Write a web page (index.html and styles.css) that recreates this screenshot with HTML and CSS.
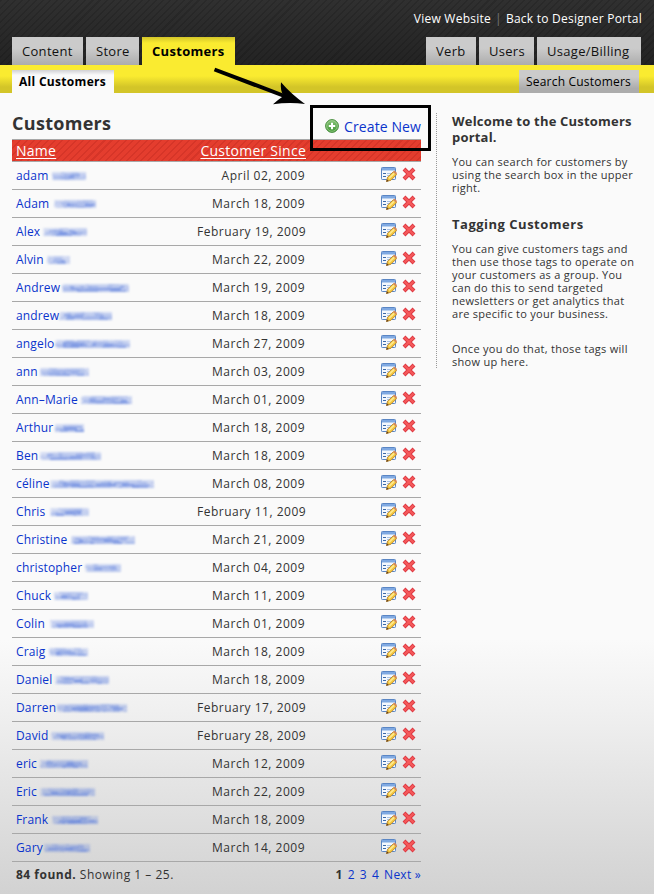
FILE: index.html
```html
<!DOCTYPE html>
<html lang="en">
<head>
<meta charset="utf-8">
<title>Customers</title>
<link rel="stylesheet" href="styles.css">
</head>
<body>
<svg class="defs" width="0" height="0">
  <defs>
    <linearGradient id="g-green" x1="0" y1="0" x2="0" y2="1"><stop offset="0" stop-color="#8cc47c"/><stop offset="1" stop-color="#3c9430"/></linearGradient>
    <symbol id="i-edit" viewBox="0 0 16 16">
      <rect x="0.5" y="1.5" width="14" height="12" rx="0.8" fill="#f4f8fd" stroke="#5a86c4"/>
      <rect x="1" y="2" width="13" height="2.500" fill="#7fa9e2"/>
      <path d="M2 7.500h3M2 10.500h3" stroke="#3d6ba8"/>
      <path d="M6 7.500h6M6 9.500h4" stroke="#a9c3e6"/>
      <path d="M5.500 15.500L6.600 11.200L12.300 5.800L15.600 8.600L10 14.200Z" fill="#f4c63c" stroke="#b8842f" stroke-width=".9"/>
      <path d="M8 12.300L13.300 7.200" stroke="#fde88c" stroke-width="1.800"/>
      <path d="M12 5.900L13.500 4.500L16 7L15.500 8.700Z" fill="#d98a58"/>
      <path d="M5.200 15.800L6 13.400L7.800 15Z" fill="#604020"/>
    </symbol>
    <symbol id="i-del" viewBox="0 0 14 14">
      <path d="M2 2L12 12M12 2L2 12" stroke="#dc3640" stroke-width="4"/>
      <path d="M2.500 2.500L11.500 11.500M11.500 2.500L2.500 11.500" stroke="#f5595a" stroke-width="2.400"/>
    </symbol>
  </defs>
</svg>
<header class="top">
  <div class="links"><a>View Website</a><i>|</i><a>Back to Designer Portal</a></div>
  <div class="tabs">
    <nav class="group"><a class="tab t-content">Content</a><a class="tab t-store">Store</a><a class="tab t-customers active">Customers</a></nav>
    <nav class="group"><a class="tab t-verb">Verb</a><a class="tab t-users">Users</a><a class="tab t-usage">Usage/Billing</a></nav>
  </div>
</header>
<div class="subbar"><a class="sub current">All Customers</a><a class="sub search">Search Customers</a></div>
<div class="columns">
  <main>
    <div class="titlebar">
      <h1>Customers</h1>
      <a class="create"><svg width="14" height="14" viewBox="0 0 14 14"><circle cx="7" cy="7" r="6.400" fill="url(#g-green)" stroke="#4a8f40"/><circle cx="7" cy="7" r="5.300" fill="none" stroke="#a5d497" stroke-width=".7"/><path d="M7 3.800v6.400M3.800 7h6.400" stroke="#fff" stroke-width="2"/></svg><span>Create New</span></a>
    </div>
    <div class="thead"><a>Name</a><a>Customer Since</a></div>
    <div id="rows"></div>
    <div class="foot"><span><b>84 found.</b> Showing 1 – 25.</span><span class="pager"><b>1</b><a>2</a><a>3</a><a>4</a><a>Next »</a></span></div>
  </main>
  <aside>
    <h2>Welcome to the Customers<br>portal.</h2>
    <p>You can search for customers by<br>using the search box in the upper<br>right.</p>
    <h2 class="second">Tagging Customers</h2>
    <p>You can give customers tags and<br>then use those tags to operate on<br>your customers as a group. You<br>can do this to send targeted<br>newsletters or get analytics that<br>are specific to your business.</p>
    <p class="last">Once you do that, those tags will<br>show up here.</p>
  </aside>
</div>
<div class="callout"></div>
<svg class="arrow" width="100" height="46" viewBox="210 64 100 46"><path d="M214.500 69.500L287 97" stroke="#000" stroke-width="4"/><path d="M305 104Q291 94 281 82.300Q280 90 283.500 96Q279 99 273 104.300Q289 102 305 104Z"/></svg>
<script src="rows.js"></script>
</body>
</html>
```
FILE: styles.css
```css
* { box-sizing: border-box; }
body {
  margin: 0;
  height: 894px;
  overflow: hidden;
  position: relative;
  font: 12px/16px "Open Sans", "Noto Sans", sans-serif;
  letter-spacing: .5px;
  color: #333;
  background: linear-gradient(#fafafa 640px, #f0f0f0 710px, #d2d2d2 894px);
}
.defs { position: absolute; }
a { color: #0a34cc; white-space: nowrap; }
.top {
  height: 65px;
  display: flex;
  flex-direction: column;
  justify-content: space-between;
  background: repeating-linear-gradient(135deg, rgba(0,0,0,.13) 0 1.500px, transparent 1.500px 5px), linear-gradient(#303030, #232323);
}
.links { display: flex; justify-content: flex-end; padding: 11px 12px 0 0; letter-spacing: .25px; }
.links a { color: #fff; }
.links i { font-style: normal; color: #777; margin: 0 4px; }
.tabs { display: flex; justify-content: space-between; padding: 0 13px 0 12px; }
.group { display: flex; gap: 3px; }
.tab {
  height: 28px;
  padding-left: 10px;
  font-size: 13px;
  line-height: 29px;
  letter-spacing: .3px;
  color: #111;
  background: linear-gradient(#cbcbcb 40%, #acacac);
}
.tab.active { background: linear-gradient(#d3c52a, #faeb30 6px); font-weight: 700; color: #000; }
.t-content { width: 71px; }
.t-store { width: 53px; }
.t-customers { width: 93px; }
.t-verb { width: 50px; }
.t-users { width: 55px; }
.t-usage { width: 104px; }
.subbar {
  height: 28px;
  padding: 5px 15px 0 12px;
  display: flex;
  justify-content: space-between;
  background: linear-gradient(#faeb30 11px, #d3c528 22px);
}
.sub { height: 23px; line-height: 24px; padding-left: 7px; color: #000; }
.current { width: 102px; font-weight: 700; letter-spacing: .3px; background: linear-gradient(#d0d0d4, #fafafa 5px); }
.search { width: 120px; letter-spacing: .2px; background: linear-gradient(#cbcbcb 30%, #acacac 80%); }
.columns { display: flex; padding-left: 12px; }
main { width: 409px; }
.titlebar { height: 46px; display: flex; justify-content: space-between; }
h1 { margin: 18px 0 0; font-size: 18px; line-height: 24px; letter-spacing: .3px; }
.create { display: flex; gap: 5px; margin-top: 24px; font-size: 14px; line-height: 20px; letter-spacing: .1px; }
.create svg { margin-top: 2px; }
.thead {
  height: 23px;
  display: flex;
  justify-content: space-between;
  padding: 0 115px 0 4px;
  border: solid #a8a8a8;
  border-width: 1px 0;
  background: repeating-linear-gradient(135deg, rgba(120,0,0,.13) 0 1.500px, transparent 1.500px 5px), #e43d2e;
}
.thead a { color: #fff; font-size: 14px; line-height: 22px; letter-spacing: .25px; text-decoration: underline; text-underline-offset: 2px; }
.row {
  height: 28px;
  display: grid;
  grid-template-columns: 181px 108px 1fr;
  padding: 0 4px;
  line-height: 27px;
  border-bottom: 1px solid #a8a8a8;
}
.person { display: flex; align-items: center; letter-spacing: .15px; }
.person a { flex: none; }
.date { text-align: right; white-space: nowrap; }
.actions { display: flex; align-items: center; justify-content: flex-end; gap: 5px; padding: 0 1px 3px 0; }
.foot { display: flex; justify-content: space-between; padding: 4px 0 0 4px; line-height: 18px; }
.pager { display: flex; gap: 5px; letter-spacing: .25px; }
aside {
  margin: 20px 0 0 15px;
  width: 200px;
  height: 255px;
  padding-left: 16px;
  background: repeating-linear-gradient(#999 0 1px, transparent 1px 2px) 0 0 / 1px 100% no-repeat;
}
h2 { margin: 0; font-size: 13px; line-height: 16px; letter-spacing: .2px; white-space: nowrap; }
aside p { margin: 10px 0 0; font-size: 11px; line-height: 13px; letter-spacing: .28px; white-space: nowrap; }
h2.second { margin-top: 22px; letter-spacing: .5px; }
aside p.last { margin-top: 22px; }
.callout { position: absolute; left: 310px; top: 105px; width: 121px; height: 46px; border: 3px solid #000; }
.arrow { position: absolute; left: 210px; top: 64px; }
.smudge { filter: blur(.8px); margin-top: 1px; }
```
FILE: rows.js
```js
// name, smudge start, smudge end, date
const people = [
  ["adam", 52, 86, "April 02, 2009"],
  ["Adam", 54, 96, "March 18, 2009"],
  ["Alex", 43, 87, "February 19, 2009"],
  ["Alvin", 47, 70, "March 22, 2009"],
  ["Andrew", 62, 129, "March 19, 2009"],
  ["andrew", 59, 112, "March 18, 2009"],
  ["angelo", 55, 130, "March 27, 2009"],
  ["ann", 40, 89, "March 03, 2009"],
  ["Ann–Marie", 81, 132, "March 01, 2009"],
  ["Arthur", 55, 84, "March 18, 2009"],
  ["Ben", 40, 101, "March 18, 2009"],
  ["céline", 50, 154, "March 08, 2009"],
  ["Chris", 50, 89, "February 11, 2009"],
  ["Christine", 71, 135, "March 21, 2009"],
  ["christopher", 85, 121, "March 04, 2009"],
  ["Chuck", 54, 88, "March 11, 2009"],
  ["Colin", 50, 94, "March 01, 2009"],
  ["Craig", 49, 88, "March 18, 2009"],
  ["Daniel", 55, 109, "March 18, 2009"],
  ["Darren", 57, 127, "February 17, 2009"],
  ["David", 51, 104, "February 28, 2009"],
  ["eric", 40, 88, "March 12, 2009"],
  ["Eric", 40, 95, "March 22, 2009"],
  ["Frank", 52, 98, "March 18, 2009"],
  ["Gary", 44, 90, "March 14, 2009"]
];
let seed = 7;
const rnd = () => (seed = (seed * 16807) % 2147483647) / 2147483647;
function smudge(w) {
  const bands = [0.3, 0.55, 0.7, 0.6];
  let s = "";
  bands.forEach((band, i) => {
    let x = Math.floor(rnd() * 3);
    while (x < w) {
      const step = 3 + Math.floor(rnd() * 7);
      const edge = x < 3 || x > w - 9 ? 0.5 : 1;
      s += `<rect x="${x}" y="${i * 2 + 1}" width="${Math.min(step, w - x)}" height="2" opacity="${(band * edge * (0.45 + rnd() * 0.75)).toFixed(2)}"/>`;
      x += step;
    }
  });
  return `<svg class="smudge" width="${w}" height="10" fill="#5c7edc"><rect y="1" width="${w}" height="8" opacity=".15"/>${s}</svg>`;
}
document.getElementById("rows").innerHTML = people.map(([name, from, to, date]) =>
  `<div class="row"><div class="person"><a style="width:${from - 16}px">${name}</a>${smudge(to - from)}</div>` +
  `<div class="date">${date}</div><div class="actions"><svg width="16" height="16"><use href="#i-edit"/></svg>` +
  `<svg width="14" height="14"><use href="#i-del"/></svg></div></div>`).join("");
```
